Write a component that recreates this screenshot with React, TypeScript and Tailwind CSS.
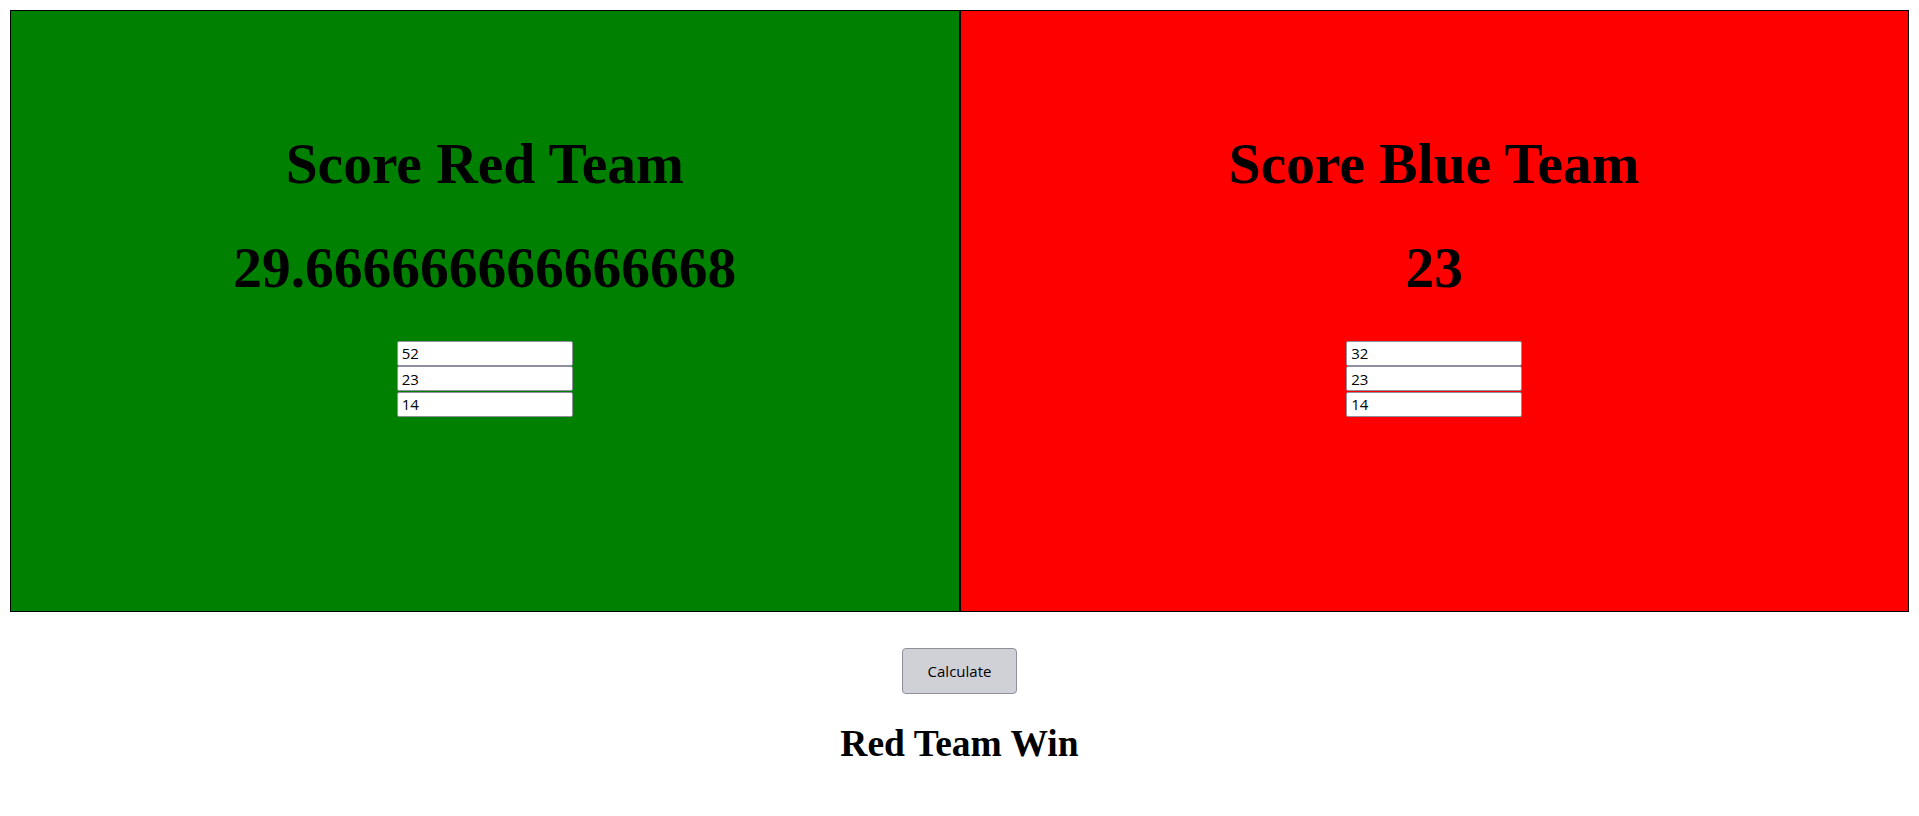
import { useState } from 'react'

const serif = { fontFamily: '"Liberation Serif", "Times New Roman", serif' }

function TeamPanel({ title, score, values, bg }: { title: string; score: string; values: string[]; bg: string }) {
  return (
    <div className={`flex-1 h-[602px] border border-black flex flex-col items-center pt-[120px] ${bg}`}>
      <h1 className="text-[57.5px] leading-[66px] font-bold text-black font-['Liberation_Serif',serif]">{title}</h1>
      <h1 className="mt-[38px] text-[57.5px] leading-[66px] font-bold text-black font-['Liberation_Serif',serif]">{score}</h1>
      <div className="mt-[39.5px] flex flex-col gap-[0.5px]">
        {values.map((v, i) => (
          <input
            key={i}
            type="text"
            defaultValue={v}
            className="w-[176px] h-[25px] bg-white border border-[#8f8f9d] rounded-[2px] px-[4px] text-[15px] text-black font-['Open_Sans',sans-serif] outline-none"
          />
        ))}
      </div>
    </div>
  )
}

export default function App() {
  const [result] = useState('Red Team Win')

  return (
    <div className="min-h-[816px] bg-white pt-[10px]" style={serif}>
      <div className="mx-[10px] flex">
        <TeamPanel title="Score Red Team" score="29.666666666666668" values={['52', '23', '14']} bg="bg-[#008000]" />
        <TeamPanel title="Score Blue Team" score="23" values={['32', '23', '14']} bg="bg-[#ff0000]" />
      </div>

      <div className="flex justify-center mt-[36px]">
        <button className="w-[115px] h-[46px] bg-[#d0d0d7] border border-[#8f8f9d] rounded-[4px] text-[15px] text-black font-['Open_Sans',sans-serif]">
          Calculate
        </button>
      </div>

      <h2 className="mt-[28px] text-center text-[37.5px] leading-[43px] font-bold text-black font-['Liberation_Serif',serif]">
        {result}
      </h2>
    </div>
  )
}
